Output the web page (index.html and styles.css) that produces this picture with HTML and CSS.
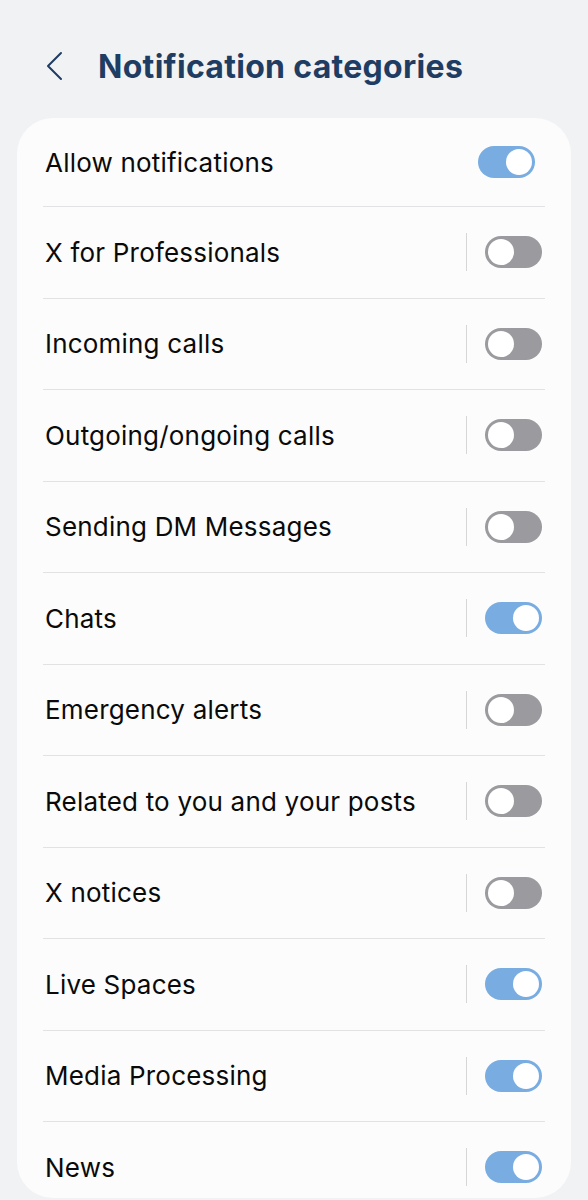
FILE: index.html
```html
<!DOCTYPE html>
<html lang="en">
<head>
    <meta charset="UTF-8">
    <meta name="viewport" content="width=device-width, initial-scale=1.0">
    <title>Notification categories</title>
    <link rel="stylesheet" href="styles.css">
</head>
<body>
    <div class="header">
        <button class="back" aria-label="Back">
            <svg width="20" height="32" viewBox="0 0 20 32">
                <path d="M17 3 L4 16 L17 29" fill="none" stroke="#1f3d63" stroke-width="2" stroke-linecap="round" stroke-linejoin="round"/>
            </svg>
        </button>
        <h1>Notification categories</h1>
    </div>

    <div class="card">
        <div class="row main">
            <span class="label">Allow notifications</span>
            <span class="switch on"></span>
        </div>
        <div class="row">
            <span class="label">X for Professionals</span>
            <span class="sep"></span>
            <span class="switch"></span>
        </div>
        <div class="row">
            <span class="label">Incoming calls</span>
            <span class="sep"></span>
            <span class="switch"></span>
        </div>
        <div class="row">
            <span class="label">Outgoing/ongoing calls</span>
            <span class="sep"></span>
            <span class="switch"></span>
        </div>
        <div class="row">
            <span class="label">Sending DM Messages</span>
            <span class="sep"></span>
            <span class="switch"></span>
        </div>
        <div class="row">
            <span class="label">Chats</span>
            <span class="sep"></span>
            <span class="switch on"></span>
        </div>
        <div class="row">
            <span class="label">Emergency alerts</span>
            <span class="sep"></span>
            <span class="switch"></span>
        </div>
        <div class="row">
            <span class="label">Related to you and your posts</span>
            <span class="sep"></span>
            <span class="switch"></span>
        </div>
        <div class="row">
            <span class="label">X notices</span>
            <span class="sep"></span>
            <span class="switch"></span>
        </div>
        <div class="row">
            <span class="label">Live Spaces</span>
            <span class="sep"></span>
            <span class="switch on"></span>
        </div>
        <div class="row">
            <span class="label">Media Processing</span>
            <span class="sep"></span>
            <span class="switch on"></span>
        </div>
        <div class="row">
            <span class="label">News</span>
            <span class="sep"></span>
            <span class="switch on"></span>
        </div>
    </div>
</body>
</html>
```

FILE: styles.css
```css
body {
    margin: 0;
    padding: 0;
    background: #f0f2f4;
    font-family: Inter, "Noto Sans", sans-serif;
    color: #0a0a0a;
}

.header {
    display: flex;
    align-items: center;
    height: 118px;
    padding: 14px 0 0 44px;
    box-sizing: border-box;
}

.back {
    background: none;
    border: none;
    padding: 0;
    width: 54px;
    height: 32px;
    display: flex;
    align-items: center;
    cursor: pointer;
}

h1 {
    margin: 0;
    font-size: 32px;
    font-weight: 700;
    color: #1f3d63;
    letter-spacing: 0.3px;
}

.card {
    background: #fcfcfc;
    margin: 0 17px;
    border-radius: 36px;
    padding: 0 26px;
}

.row {
    display: flex;
    align-items: center;
    height: 90.5px;
    border-bottom: 1px solid #e2e2e4;
}

.row.main {
    height: 88px;
}

.row:last-child {
    border-bottom: none;
    height: 62px;
    padding-top: 14px;
}

.label {
    flex: 1;
    padding-left: 2px;
    font-size: 26px;
    letter-spacing: 0.2px;
}

.sep {
    width: 1px;
    height: 38px;
    background: #d6d6d8;
    margin-right: 18px;
}

.switch {
    width: 57px;
    height: 32px;
    border-radius: 16px;
    background: #9b9b9f;
    position: relative;
    margin-right: 3px;
}

.main .switch {
    margin-right: 10px;
}

.switch::after {
    content: "";
    position: absolute;
    top: 3px;
    left: 3px;
    width: 26px;
    height: 26px;
    border-radius: 50%;
    background: #fff;
}

.switch.on {
    background: #79ade2;
}

.switch.on::after {
    left: 28px;
}
```
